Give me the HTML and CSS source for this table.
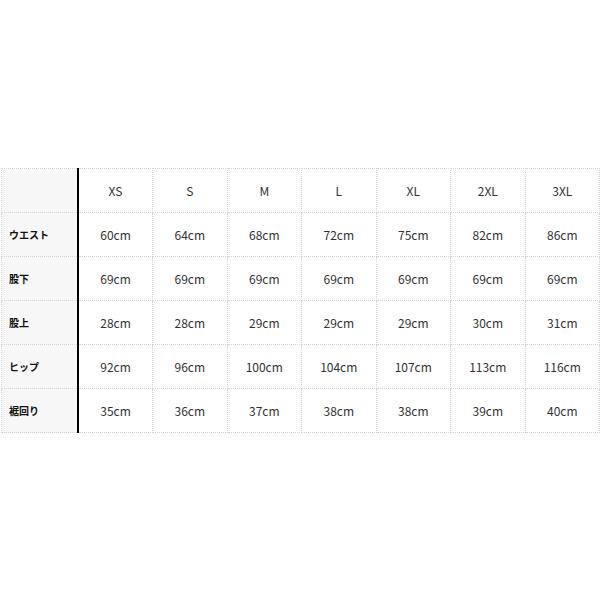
FILE: index.html
```html
<!DOCTYPE html>
<html lang="ja">
<head>
<meta charset="utf-8">
<link rel="stylesheet" href="styles.css">
</head>
<body>
<div class="wrap">
<table class="size">
  <tr class="head">
    <th class="label"></th>
    <th>XS</th><th>S</th><th>M</th><th>L</th><th>XL</th><th>2XL</th><th>3XL</th>
  </tr>
  <tr>
    <th class="label">ウエスト</th>
    <td>60cm</td><td>64cm</td><td>68cm</td><td>72cm</td><td>75cm</td><td>82cm</td><td>86cm</td>
  </tr>
  <tr>
    <th class="label">股下</th>
    <td>69cm</td><td>69cm</td><td>69cm</td><td>69cm</td><td>69cm</td><td>69cm</td><td>69cm</td>
  </tr>
  <tr>
    <th class="label">股上</th>
    <td>28cm</td><td>28cm</td><td>29cm</td><td>29cm</td><td>29cm</td><td>30cm</td><td>31cm</td>
  </tr>
  <tr>
    <th class="label">ヒップ</th>
    <td>92cm</td><td>96cm</td><td>100cm</td><td>104cm</td><td>107cm</td><td>113cm</td><td>116cm</td>
  </tr>
  <tr>
    <th class="label">裾回り</th>
    <td>35cm</td><td>36cm</td><td>37cm</td><td>38cm</td><td>38cm</td><td>39cm</td><td>40cm</td>
  </tr>
</table>
</div>
</body>
</html>
```
FILE: styles.css
```css
html, body {
  margin: 0;
  padding: 0;
  background: #fff;
}
.wrap {
  padding: 168px 1px 0 1px;
}
.size {
  width: 599px;
  border-collapse: collapse;
  table-layout: fixed;
  font-family: "Noto Sans CJK JP", "Noto Sans", sans-serif;
  font-size: 12px;
  color: #333;
}
.size th, .size td {
  border: 1px dotted #d4d4d4;
  height: 43px;
  padding: 0;
  text-align: center;
  vertical-align: middle;
  font-weight: normal;
}
.size th.label {
  width: 68px;
  background: #f7f7f7;
  border-right: 2px solid #000;
  text-align: left;
  padding-left: 7px;
  font-weight: bold;
  font-size: 10px;
  color: #111;
}
```
